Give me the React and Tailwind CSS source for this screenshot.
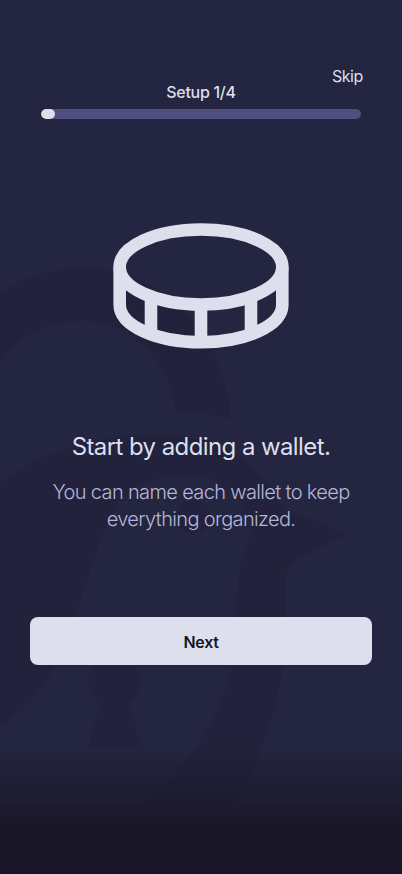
import React, { useState } from "react";

const TOTAL_STEPS = 4;

/* ================= BACKGROUND ================= */
const BirdBackdrop = () => (
  <svg
    className="absolute inset-0 h-full w-full"
    viewBox="0 0 402 874"
    fill="#22223c"
    aria-hidden="true"
  >
    <path d="M0 293C24 276 52 268 82 268C162 268 225 331 231 419C213 414 195 412 176 412C170 359 130 321 82 321C45 321 15 338 0 365Z" />
    <path d="M0 484C44 450 98 434 158 435C218 436 253 458 281 505C298 519 321 520 345 535L301 557C291 562 286 569 286 580V610C286 720 250 795 190 852H60C115 830 165 795 196 747C224 706 237 665 237 610C237 574 243 551 253 532C247 497 222 475 187 475C144 475 113 496 102 535C92 563 84 590 74 619C60 668 35 704 0 725Z" />
    <circle cx="193" cy="517" r="17" />
    <path d="M115 657a25 25 0 0 1 13 46.500L142 748H88L101 703.500A25 25 0 0 1 115 657Z" />
  </svg>
);

const CoinIcon = () => (
  <svg
    width="176"
    height="126"
    viewBox="0 0 176 126"
    fill="none"
    stroke="#dddfec"
    strokeWidth="12.600"
    aria-hidden="true"
  >
    <ellipse cx="88" cy="44" rx="81.300" ry="37.500" />
    <path d="M6.700 44v37.700c0 20.700 36.400 37.500 81.300 37.500s81.300-16.800 81.300-37.500V44" />
    <path d="M38 74v37M88 81v38M138 74v37" />
  </svg>
);

const ProgressBar = ({ value }) => (
  <div className="h-[10px] w-full overflow-hidden rounded-full bg-[#504e7f]">
    <div
      className="h-full rounded-full bg-[#dddfec]"
      style={{ width: `${value}%` }}
    />
  </div>
);

const App = () => {
  const [step, setStep] = useState(1);
  const progress = 4.4 + ((step - 1) / (TOTAL_STEPS - 1)) * 95.6;

  return (
    <div className="relative h-[874px] w-full overflow-hidden bg-[#242540] font-['Inter',sans-serif] text-[#dddfec]">
      <BirdBackdrop />
      <div className="absolute inset-x-0 bottom-0 h-[128px] bg-linear-to-b from-[#191727]/0 via-[#191727]/60 via-40% to-[#191727] to-65%" />

      <div className="relative flex h-full flex-col px-[30px] pt-[66px]">
        {/* ================= HEADER ================= */}
        <button className="mr-[9px] h-5 self-end text-base leading-5 tracking-[-0.4px]">
          Skip
        </button>
        <div className="-mt-1 flex flex-col items-center px-[11px]">
          <p className="mb-[7px] text-base leading-5 font-medium tracking-[-0.3px]">
            Setup {step}/{TOTAL_STEPS}
          </p>
          <ProgressBar value={progress} />
        </div>

        <div className="mt-[104px] flex justify-center">
          <CoinIcon />
        </div>

        {/* ================= COPY ================= */}
        <div className="mt-[82px] text-center">
          <h1 className="text-2xl leading-8 tracking-[-0.59px]">
            Start by adding a wallet.
          </h1>
          <p className="mt-4 text-xl leading-[27px] font-light tracking-[-0.65px] text-[#b6b5d6]">
            You can name each wallet to keep
            <br />
            everything organized.
          </p>
        </div>

        <button
          onClick={() => setStep(Math.min(step + 1, TOTAL_STEPS))}
          className="mt-[84px] h-12 w-full shrink-0 rounded-lg bg-[#dddfec] pt-0.5 text-base font-semibold tracking-[-0.3px] text-[#17152b]"
        >
          Next
        </button>
      </div>
    </div>
  );
};

export default App;
